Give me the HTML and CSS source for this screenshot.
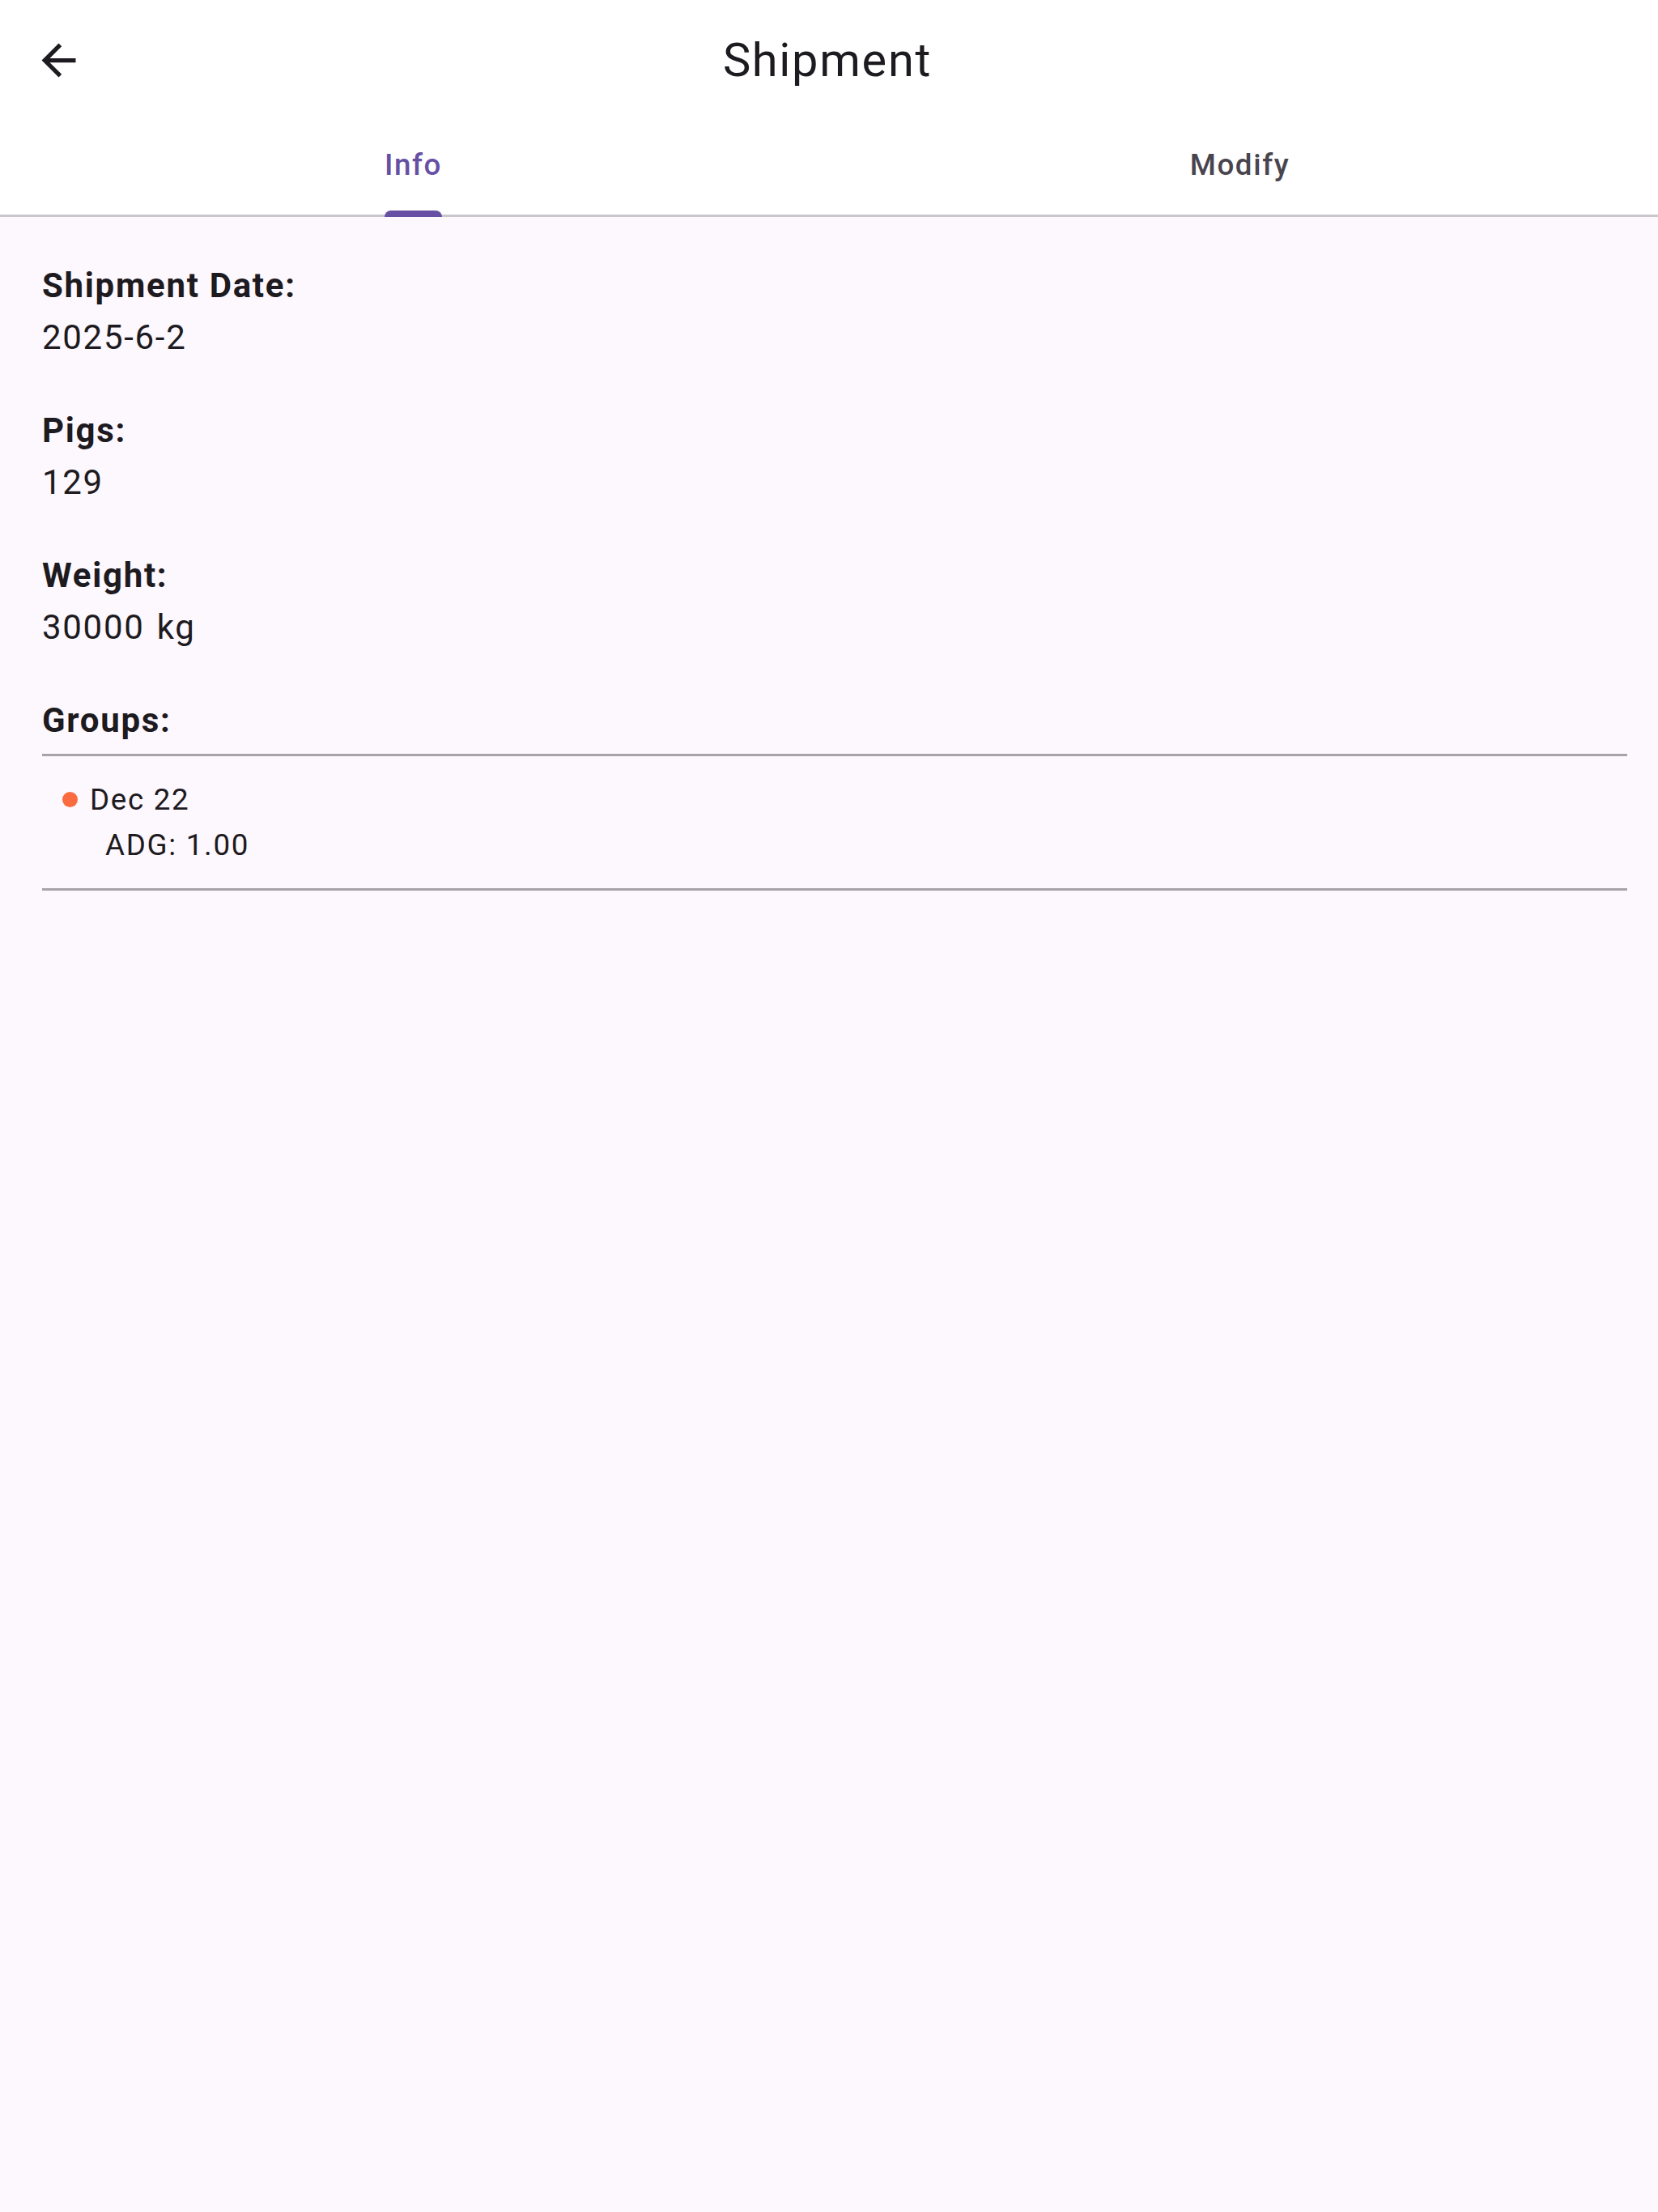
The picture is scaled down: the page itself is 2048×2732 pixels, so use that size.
FILE: index.html
```html
<!DOCTYPE html>
<html lang="en">
<head>
<meta charset="utf-8">
<title>Shipment</title>
<link rel="stylesheet" href="styles.css">
</head>
<body>
<div class="app">
  <header class="appbar">
    <div class="leading">
      <svg class="back-icon" viewBox="0 0 24 24" aria-hidden="true"><path d="M20 11H7.83l5.59-5.59L12 4l-8 8 8 8 1.41-1.41L7.83 13H20v-2z"/></svg>
    </div>
    <h1 class="title">Shipment</h1>
    <div class="trailing"></div>
  </header>
  <nav class="tabs">
    <div class="tab"><span class="tab-label active">Info</span></div>
    <div class="tab"><span class="tab-label tab-label-modify">Modify</span></div>
  </nav>
  <main class="content">
    <section class="field">
      <div class="label">Shipment Date:</div>
      <div class="value">2025-6-2</div>
    </section>
    <section class="field">
      <div class="label">Pigs:</div>
      <div class="value">129</div>
    </section>
    <section class="field">
      <div class="label">Weight:</div>
      <div class="value">30000 kg</div>
    </section>
    <section class="groups">
      <div class="label">Groups:</div>
      <div class="divider divider-top"></div>
      <div class="group">
        <div class="group-name"><span class="dot"></span><span>Dec 22</span></div>
        <div class="group-adg">ADG: 1.00</div>
      </div>
      <div class="divider"></div>
    </section>
  </main>
</div>
</body>
</html>
```

FILE: styles.css
```css
* { box-sizing: border-box; }

html, body {
  margin: 0;
  padding: 0;
}

body {
  font-family: Roboto, "Liberation Sans", sans-serif;
  color: #1D1B20;
  background: #FDF7FE;
}

.app {
  min-height: 2732px;
  display: flex;
  flex-direction: column;
}

.appbar {
  height: 147px;
  background: #FFFFFF;
  display: grid;
  grid-template-columns: 147px 1fr 147px;
  align-items: center;
}

.leading {
  padding-left: 41px;
  display: flex;
  align-items: center;
  padding-top: 2px;
}

.back-icon {
  width: 63px;
  height: 63px;
  fill: #1D1B20;
}

.title {
  margin: 0;
  text-align: center;
  font-size: 57.75px;
  font-weight: 400;
  line-height: 1;
  letter-spacing: 1.7px;
  color: #1D1B20;
  padding-top: 3px;
  padding-right: 4px;
}

.tabs {
  height: 121px;
  background: #FFFFFF;
  display: flex;
  border-bottom: 3px solid #CAC6CC;
}

.tab {
  flex: 1;
  display: flex;
  justify-content: center;
}

.tab-label {
  position: relative;
  display: flex;
  align-items: center;
  font-size: 36.75px;
  font-weight: 500;
  letter-spacing: 1.6px;
  color: #49454F;
  padding-bottom: 6px;
  margin-right: 3px;
}

.tab-label-modify {
  margin-right: 9px;
}

.tab-label.active {
  color: #6750A4;
}

.tab-label.active::after {
  content: "";
  position: absolute;
  left: 0;
  right: 0;
  bottom: -3px;
  height: 8px;
  background: #6750A4;
  border-radius: 8px 8px 0 0;
}

.content {
  flex: 1;
  padding: 53px 38px 0 52px;
  background: #FDF7FE;
}

.field {
  margin-bottom: 52px;
}

.label {
  font-size: 42px;
  font-weight: 700;
  line-height: 63px;
  letter-spacing: 1.7px;
  color: #1D1B20;
}

.value {
  font-size: 42px;
  font-weight: 400;
  line-height: 63px;
  letter-spacing: 1.7px;
  word-spacing: 3px;
  color: #1D1B20;
  padding-top: 1px;
}

.divider {
  height: 3px;
  background: #A6A4A8;
}

.divider-top {
  margin-top: 10px;
}

.group {
  padding: 26px 0 25px 0;
  font-size: 36.75px;
  line-height: 56px;
  letter-spacing: 1.7px;
  color: #1D1B20;
}

.group-name {
  display: flex;
  align-items: center;
  padding-left: 25px;
}

.dot {
  width: 19px;
  height: 19px;
  border-radius: 50%;
  background: #FA6B40;
  margin-right: 15px;
  margin-top: -1px;
}

.group-adg {
  padding-left: 78px;
}
```
